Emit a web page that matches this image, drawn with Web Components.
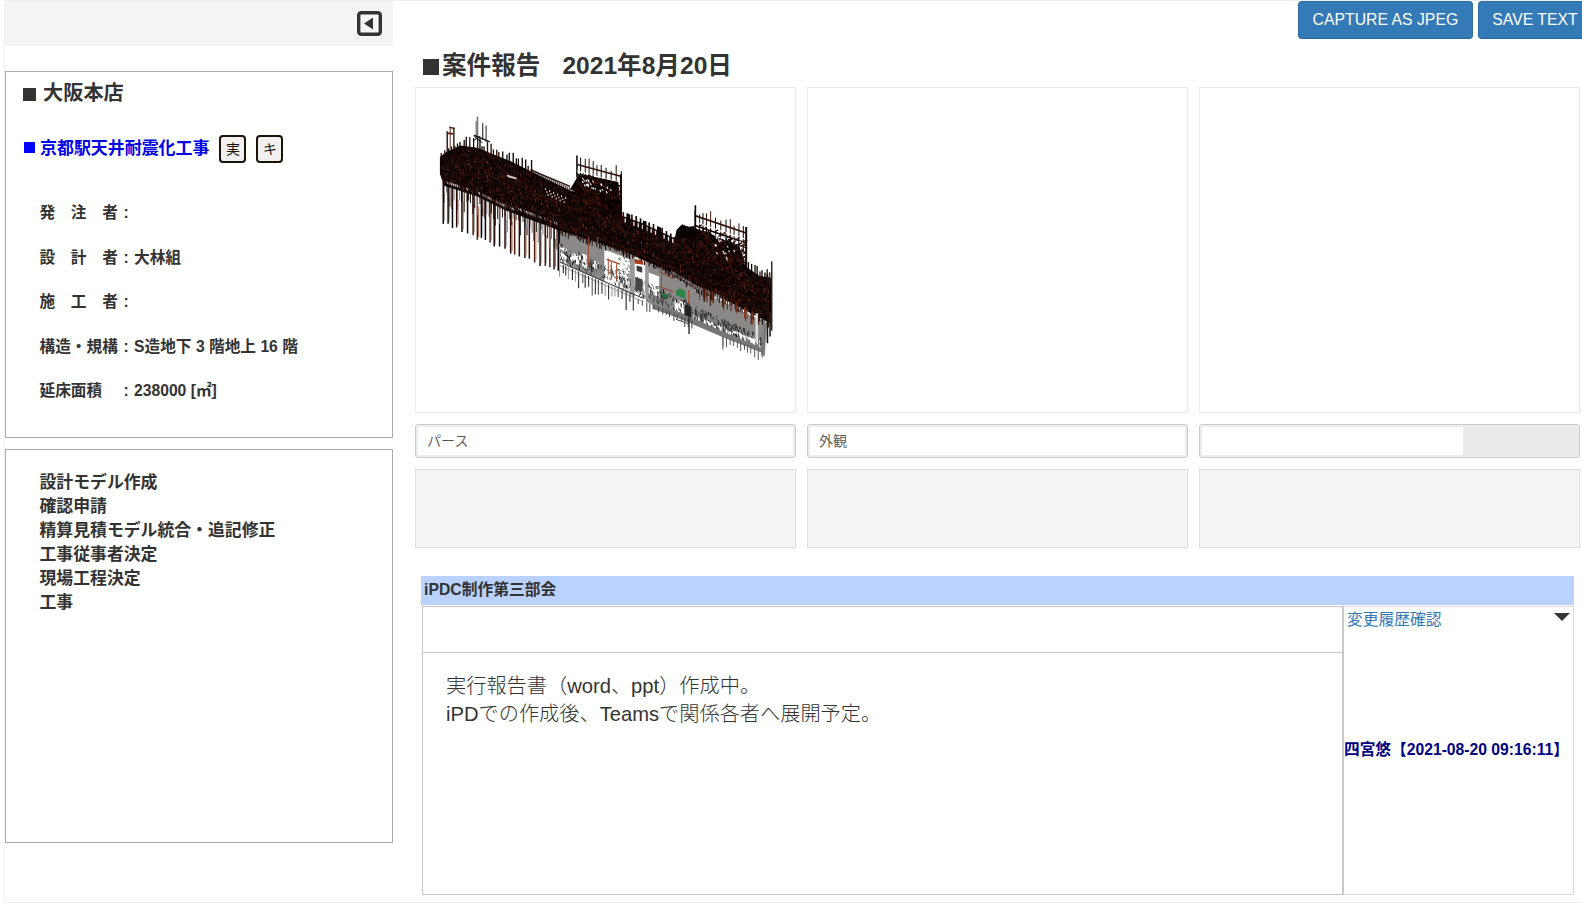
<!DOCTYPE html>
<html lang="ja">
<head>
<meta charset="utf-8">
<title>案件報告</title>
<style>
html,body{margin:0;height:100%;overflow:hidden;background:#fff}
body{font-family:"Liberation Sans","Noto Sans CJK JP",sans-serif;color:#333}
</style>
</head>
<body>
<report-app></report-app>
<script>
const define=(name,html,setup)=>customElements.define(name,class extends HTMLElement{
  constructor(){super();this.attachShadow({mode:'open'}).innerHTML=html;if(setup)setup(this.shadowRoot,this);}
});

define('side-header',`<style>:host{display:flex;justify-content:flex-end;box-sizing:border-box;height:46px;padding:11px 11.5px 0 0;background:#f4f4f4}svg{width:25px;height:25px}</style>
<svg viewBox="0 0 25 25"><rect x="1.7" y="1.7" width="21.6" height="21.6" rx="2.5" fill="#f6f6f6" stroke="#333" stroke-width="3.4"/><path d="M7 12.5 16 6.5V18.5Z" fill="#333"/></svg>`);

define('side-panel',`<style>:host{display:block;box-sizing:border-box;border:1px solid #aaa;margin-left:1px}</style><slot></slot>`);

define('tag-badge',`<style>:host{display:flex;align-items:center;justify-content:center;box-sizing:border-box;width:27px;height:28px;border:2px solid #1c1208;border-radius:4px;background:#f1efef;color:#1c1208;font-size:14px;line-height:20px}</style><slot></slot>`);

define('project-title',`<style>
:host{display:block;font-weight:bold}
.branch{display:flex;align-items:center;height:26px;margin:8px 0 0 17px;font-size:20.2px}
.branch i{width:13px;height:13px;background:#333;margin:3px 7px 0 0}
.branch span{margin-top:-3px}
.project{display:flex;align-items:center;height:28px;margin:29px 0 0 18px;font-size:16.95px;color:#0000e6}
.project i{width:11px;height:11px;background:#00f;margin:-3px 5px 0 0}
.project span{margin:-5px 10px 0 0}
.project tag-badge{margin-right:10px;font-weight:normal}
</style><div class="branch"><i></i><span>大阪本店</span></div>
<div class="project"><i></i><span>京都駅天井耐震化工事</span><tag-badge>実</tag-badge><tag-badge>キ</tag-badge></div>`);

define('field-row',`<style>:host{display:flex;height:44.5px;line-height:44.5px;font-size:15.7px;font-weight:bold;white-space:pre}
.l{width:84px}.c{width:10.5px}</style><span class="l"><slot name="label"></slot></span><span class="c">:</span><slot></slot>`);

define('task-list',`<style>:host{display:block;padding:21px 0 0 33.5px;font-size:16.85px;line-height:24px;font-weight:bold}</style><slot></slot>`);

define('primary-button',`<style>:host{display:block;box-sizing:border-box;height:38px;padding:0 13.5px;border:1px solid #2e6da4;border-bottom-color:#2b6599;border-radius:4px;background:#337ab7;color:#fff;font-size:15.8px;line-height:35px;white-space:nowrap;flex:none}</style><slot></slot>`);

/* Wireframe perspective of the station roof, built from seeded members. */
define('steel-model',`<style>:host{display:block;height:100%}svg{display:block;width:100%;height:100%}</style><svg viewBox="16 142 1141 975" preserveAspectRatio="none"></svg>`,root=>{
  let seed=7;const R=()=>(seed=(seed*16807)%2147483647)/2147483647;
  const at=(pts,x)=>{for(let i=1;i<pts.length;i++)if(x<=pts[i][0]){const[a,b]=pts[i-1],[c,d]=pts[i];return b+(d-b)*(x-a)/(c-a);}return pts[pts.length-1][1];};
  const top=[[88,350],[108,334],[150,315],[200,322],[300,362],[400,412],[478,450],[560,472],[635,526],[700,550],[790,592],[860,570],[940,615],[1010,680],[1050,708],[1085,712]];
  const bot=[[88,400],[100,436],[200,468],[280,508],[440,568],[560,605],[660,640],[780,694],[860,742],[940,775],[1030,822],[1085,850]];
  const poly=(p,f,e='')=>`<polygon points="${p.map(q=>q.join()).join(' ')}" fill="${f}" ${e}/>`;
  const ln=(x,y,u,v,c,w=3)=>`<path d="M${x.toFixed(1)} ${y.toFixed(1)}L${u.toFixed(1)} ${v.toFixed(1)}" stroke="${c}" stroke-width="${w}"/>`;
  const dark=['#000','#160300','#2b0b03','#0a0100'],rust=['#3b1207','#61200e','#873318','#251008'];
  const pick=a=>a[Math.floor(R()*a.length)];
  let s='';
  s+=poly([[444,560],[700,640],[860,745],[1072,850],[1066,950],[930,884],[790,828],[700,780],[444,662]],'#8b8888');
  const white=[[450,618,20,45],[478,635,34,28],[516,640,14,42],[548,660,18,24],[583,628,78,100],[674,650,34,126],[716,697,32,62],[795,776,45,50],[850,826,86,44],[945,862,110,44]];
  white.forEach(([x,y,w,h])=>s+=poly([[x,y],[x+w,y+w*.38],[x+w,y+h+w*.38],[x,y+h]],'#fff'));
  for(let i=0;i<520;i++){const x=448+R()*616,b=662+(x-444)*.44,y=b-8-R()*(x>840?38:48);s+=ln(x,y,x+R()*3,y+4+R()*11,pick(['#333','#111','#777','#444']),2.8);}
  for(let i=0;i<60;i++){const x=625+R()*38,y=650+R()*100;s+=ln(x,y,x+3,y+5,'#777',3);}
  s+=poly([[663,645],[673,648],[673,770],[663,764]],'#999')+poly([[706,665],[716,669],[716,780],[706,776]],'#999')+poly([[676,710],[698,718],[698,756],[676,748]],'#444');
  s+=ln(444,664,700,775,'#333',3)+ln(444,674,700,785,'#bbb',4)+poly([[728,790],[800,812],[940,875],[1066,927],[1066,942],[940,892],[800,832],[728,806]],'#777');
  for(let x=448;x<680;x+=7+R()*6){const y=668+(x-444)*.43;s+=ln(x,y,x,y+22+R()*34,pick(['#222','#333','#555','#999']),3.3);}
  for(let x=685;x<850;x+=9+R()*5){const y=777+(x-685)*.4;s+=ln(x,y,x,y+12+R()*16,'#444',3);}
  for(let x=940;x<1065;x+=9+R()*4){const y=888+(x-940)*.38;s+=ln(x,y,x,y+14+R()*18,'#555',3);}
  s+=ln(940,890,940,929,'#777',4)+ln(838,830,838,882,'#222',4)+ln(798,838,838,852,'#444',3);
  for(let x=98;x<447;x+=12+R()*5){const y=at(bot,x)-5,end=550+(x-98)*.42+(R()*12-6);
    s+=ln(x,y,x,end,pick(['#481a0c','#2a0c05','#080202','#180502']),4.5);
    if(R()>.35)s+=ln(x+4,y+35,x+4,end-8,pick(['#d5957c','#a65d43','#aaa','#c58169']),3);}
  for(let x=100;x<450;x+=5+R()*4){const y=at(bot,x)-5;s+=ln(x,y,x,y+18+R()*52,pick(['#222','#4d2014','#1a0602','#777','#2a0c05']),3);}
  s+=poly([...top,...bot.slice().reverse()],'#0d0301');
  s+=poly([[480,447],[508,400],[625,425],[635,535],[560,490]],'#0e0301')+poly([[794,600],[800,570],[815,554],[860,565],[990,620],[1008,680],[940,650]],'#0d0301');
  /* short braces and hangers soften both outlines of the deck */
  for(let x=92;x<1084;x+=4.5){const t=at(top,x),b=at(bot,x);
    for(let y=t+6;y<b-6;y+=7){const r=R();if(r>.5){const v=R()>.5;s+=ln(x,y,x+(v?0:6),y+(v?9:3),r>.95?'#8b3516':r>.82?'#572013':'#35120a',2.3);}}
    if(x>440)s+=ln(x,b-8,x,b+R()*18,pick(dark),3);}
  for(let k=0;k<4;k++){let d='';for(let x=96;x<1078;x+=12){const t=at(top,x),b=at(bot,x);d+=(d?'L':'M')+x+' '+(t+(b-t)*(k+.6)/4).toFixed(1);}s+=`<path d="${d}" fill="none" stroke="${k%2?'#3c150b':'#000'}" stroke-width="2"/>`;}
  for(let x=103;x<445;x+=6){const y=at(bot,x)-(x>320?22:16);if(R()>.2)s+=ln(x,y,x+2,y+8,pick(['#eee','#999','#777','#452015']),3);}
  for(let x=785;x<935;x+=5){const y=at(bot,x)-6;s+=ln(x,y,x+2,y+8,pick(['#999','#777','#bbb']),2.5);}
  for(let x=92;x<365;x+=6+R()*7){const y=at(top,x);s+=ln(x,y+12,x,y-(x<150?4:8)-R()*(x<150?8:31),pick(dark),4);}
  for(let x=365;x<480;x+=6){const y=at(top,x);s+=ln(x,y+8,x,y-9,pick(dark),3);}
  s+=ln(360,388,480,438,'#2b0b03',4);
  s+=ln(110,334,110,272,'#180806',4)+ln(130,338,130,262,'#1c0703',4)+ln(116,260,133,264,'#5a2113',5)+ln(110,278,127,280,'#401509',5)+ln(119,260,119,325,'#793220',3);
  s+=ln(201,228,201,290,'#777',5)+ln(197,242,197,295,'#222',2)+ln(217,248,217,298,'#111',3)+ln(227,255,227,304,'#222',3)+ln(190,284,238,304,'#111',4)+ln(190,300,210,287,'#111',3)+ln(191,287,216,307,'#111',3);
  const tower=(x0,x1,y0,slope,h)=>{let o='';
    for(let x=x0;x<=x1;x+=10+R()*6){const y=y0+(x-x0)*slope;o+=ln(x,y-8-R()*22,x,y+18,pick([...dark,'#3c1308']),3)+ln(x,y+22,x,y+h,pick([...dark,'#3c1308']),3.4);}
    for(let j=0;j<h;j+=15)if(j!==15)o+=ln(x0,y0+j,x1,y0+(x1-x0)*slope+j,j?pick(dark):'#310f07',j%2?3:5);
    for(let i=0;i<130;i++){const x=x0+R()*(x1-x0-10),y=y0+(x-x0)*slope+30+R()*(h-38);o+=ln(x,y,x+12,y+(R()>.5?16:-8),pick([...dark,'#46180c']),3.5);}
    return o;};
  s+=tower(501,635,372,.27,112)+tower(856,1012,526,.34,120);
  s+=ln(633,402,633,540,'#1b0703',6)+ln(500,345,500,410,'#222',4)+ln(857,495,857,590,'#170502',5)+ln(1010,560,1010,695,'#170502',6);
  for(let i=0;i<48;i++){const tw=i<24,x=tw?516+R()*95:905+R()*95,y=(tw?410+(x-516)*.25+R()*30:575+(x-905)*.3+R()*70);s+=ln(x,y,x+3,y+6,pick(['#fff','#eee','#bbb']),3.5);}
  for(let i=0;i<16;i++){const x=406+i*4,y=444+i*1.8+(i%3)*7;s+=ln(x,y,x,y+5,'#f3eeee',3);}
  s+=poly([[288,402],[318,411],[320,417],[292,410]],'#d9ccc6');
  for(let x=640;x<795;x+=13){const y=at(top,x);s+=ln(x,y+24,x,y-8-R()*8,pick(dark),5);if(R()>.25)s+=ln(x+6,y+7,x+6,y+19,'#eee',4);}
  s+=[655,704,748].map(x=>poly([[x-5,520+(x-655)*.42],[x+6,523+(x-655)*.42],[x+6,555+(x-655)*.42],[x-5,550+(x-655)*.42]],'#080301')).join('');
  s+=poly([[806,565],[818,552],[835,560],[852,557],[862,590],[804,596]],'#090201');
  for(let x=1010;x<1084;x+=6+R()*7){const y=at(top,x);s+=ln(x,y+22,x,y-8-R()*24,pick([...dark,'#501b0c']),4);}
  s+=ln(1087,664,1087,872,'#111',4)+ln(1074,702,1074,910,'#1c100d',5)+ln(1082,820,1082,890,'#222',5)+ln(1068,850,1060,945,'#777',7)+ln(1042,820,1042,908,'#ddd',8);
  for(let i=0;i<30;i++){const x=865+R()*185,y=at(bot,x)-8;s+=ln(x,y,x,y+22+R()*25,pick(rust),3);}
  s+=poly([[674,656],[700,663],[700,674],[674,670]],'#aa3d19')+poly([[680,676],[697,681],[697,698],[680,692]],'#3c3c3c');
  s+=poly([[798,752],[810,745],[827,751],[827,777],[799,766]],'#2f8549')+poly([[757,758],[777,764],[775,778],[757,771]],'#286d3c')+poly([[824,793],[845,800],[845,833],[824,825]],'#222');
  [[595,655,50],[604,665,55],[620,670,55],[535,590,90],[755,680,85],[837,750,40],[562,590,35]].forEach(([x,y,h])=>s+=ln(x,y,x,y+h,'#a54c2c',3));
  s+=ln(590,658,630,672,'#a34522',4)+ln(747,694,792,716,'#94401f',3)+ln(747,739,790,755,'#94401f',3);
  root.querySelector('svg').innerHTML=s;
});

define('photo-card',`<style>:host{display:grid;grid-template-rows:326px 34px 79px;row-gap:11px}
div{box-sizing:border-box}.pic{border:1px solid #eaeaea;min-height:0}.memo{background:#f5f5f5;border:1px solid #e0e0e0}
.cap{display:flex;align-items:center;border:1px solid #ccc;border-radius:3px;box-shadow:inset 0 0 0 2px #ececec;padding:0 2px 2px 11px;font-size:14.1px;color:#555;font-weight:350;height:34px}
.shade{margin:1px 0 -1px auto;width:114px;height:28px;background:#eaeaea;display:none}
:host([shaded]) .shade{display:block}</style>
<div class="pic"><slot name="picture"></slot></div><div class="cap"><slot></slot><span class="shade"></span></div><div class="memo"></div>`);

define('section-report',`<style>
:host{display:block;width:1153px}
.bar{height:29px;background:#b9d2ff;font-size:15.75px;line-height:27px;font-weight:bold;padding-left:3px}
.grid{display:grid;grid-template-columns:922px 230px;height:290px;margin:0 0 0 1px}
.main{box-sizing:border-box;border:1px solid #c8c8c8;border-right-width:2px;display:grid;grid-template-rows:46px 1fr;margin-top:1px}
.head{border-bottom:1px solid #c8c8c8}
.text{padding:19px 0 0 23px;font-size:20.2px;line-height:28px;color:#333;font-weight:300}
.side{box-sizing:border-box;border:1px solid #ddd;border-left:0;margin-top:1px;display:flex;flex-direction:column}
.hist{display:flex;justify-content:space-between;font-size:15.75px;line-height:25px;color:#337ab7;padding:0 3px 0 3px}
.hist svg{width:16px;height:8px;margin-top:6px}
.by{margin-top:105px;font-size:15.7px;line-height:25px;font-weight:bold;color:#000080;white-space:nowrap}
</style><div class="bar">iPDC制作第三部会</div>
<div class="grid"><div class="main"><div class="head"></div><div class="text"><slot></slot></div></div>
<div class="side"><div class="hist"><span>変更履歴確認</span><svg viewBox="0 0 16 8"><path d="M0 0H16L8 8Z" fill="#333"/></svg></div><div class="by">四宮悠【2021-08-20 09:16:11】</div></div></div>`);

define('report-app',`<style>
:host{display:block;box-sizing:border-box;width:1582px;height:903px;padding-left:4px;overflow:hidden}
.frame{box-sizing:border-box;display:grid;grid-template-columns:389px 1fr;height:903px;border-top:1px solid #eee;border-bottom:1px solid #f0f0f0;box-shadow:inset 1px 0 #f2f2f2}
side-header{height:45px;padding-top:10px}
.p1{height:367px;margin-top:25px}.p2{height:394px;margin-top:11px}
.fields{padding:28px 0 0 33.5px}
main{min-width:0;padding-left:22px}
.actions{display:flex;gap:5px;margin-left:883px;height:38px}
h1{margin:7px 0 0 7px;height:41px;line-height:35px;font-size:24.6px;display:flex;align-items:center}
h1 i{width:16px;height:16px;background:#333;margin:0 3px 0 1px}h1 span{white-space:pre;margin-top:-3px}
.cards{display:grid;grid-template-columns:repeat(3,381px);gap:11px}
section-report{margin:28px 0 0 6px}
</style><div class="frame"><aside><side-header></side-header>
<side-panel class="p1"><project-title></project-title><div class="fields">
<field-row><span slot="label">発　注　者</span></field-row>
<field-row><span slot="label">設　計　者</span>大林組</field-row>
<field-row><span slot="label">施　工　者</span></field-row>
<field-row><span slot="label">構造・規構</span>S造地下 3 階地上 16 階</field-row>
<field-row><span slot="label">延床面積</span>238000 [㎡]</field-row></div></side-panel>
<side-panel class="p2"><task-list><div>設計モデル作成</div><div>確認申請</div><div>精算見積モデル統合・追記修正</div><div>工事従事者決定</div><div>現場工程決定</div><div>工事</div></task-list></side-panel></aside>
<main><div class="actions"><primary-button>CAPTURE AS JPEG</primary-button><primary-button>SAVE TEXT</primary-button></div>
<h1><i></i><span>案件報告</span><span style="margin-left:22px">2021年8月20日</span></h1>
<div class="cards"><photo-card><steel-model slot="picture"></steel-model>パース</photo-card><photo-card>外観</photo-card><photo-card shaded></photo-card></div>
<section-report><div>実行報告書（word、ppt）作成中。</div><div>iPDでの作成後、Teamsで関係各者へ展開予定。</div></section-report></main></div>`);
</script>
</body>
</html>
